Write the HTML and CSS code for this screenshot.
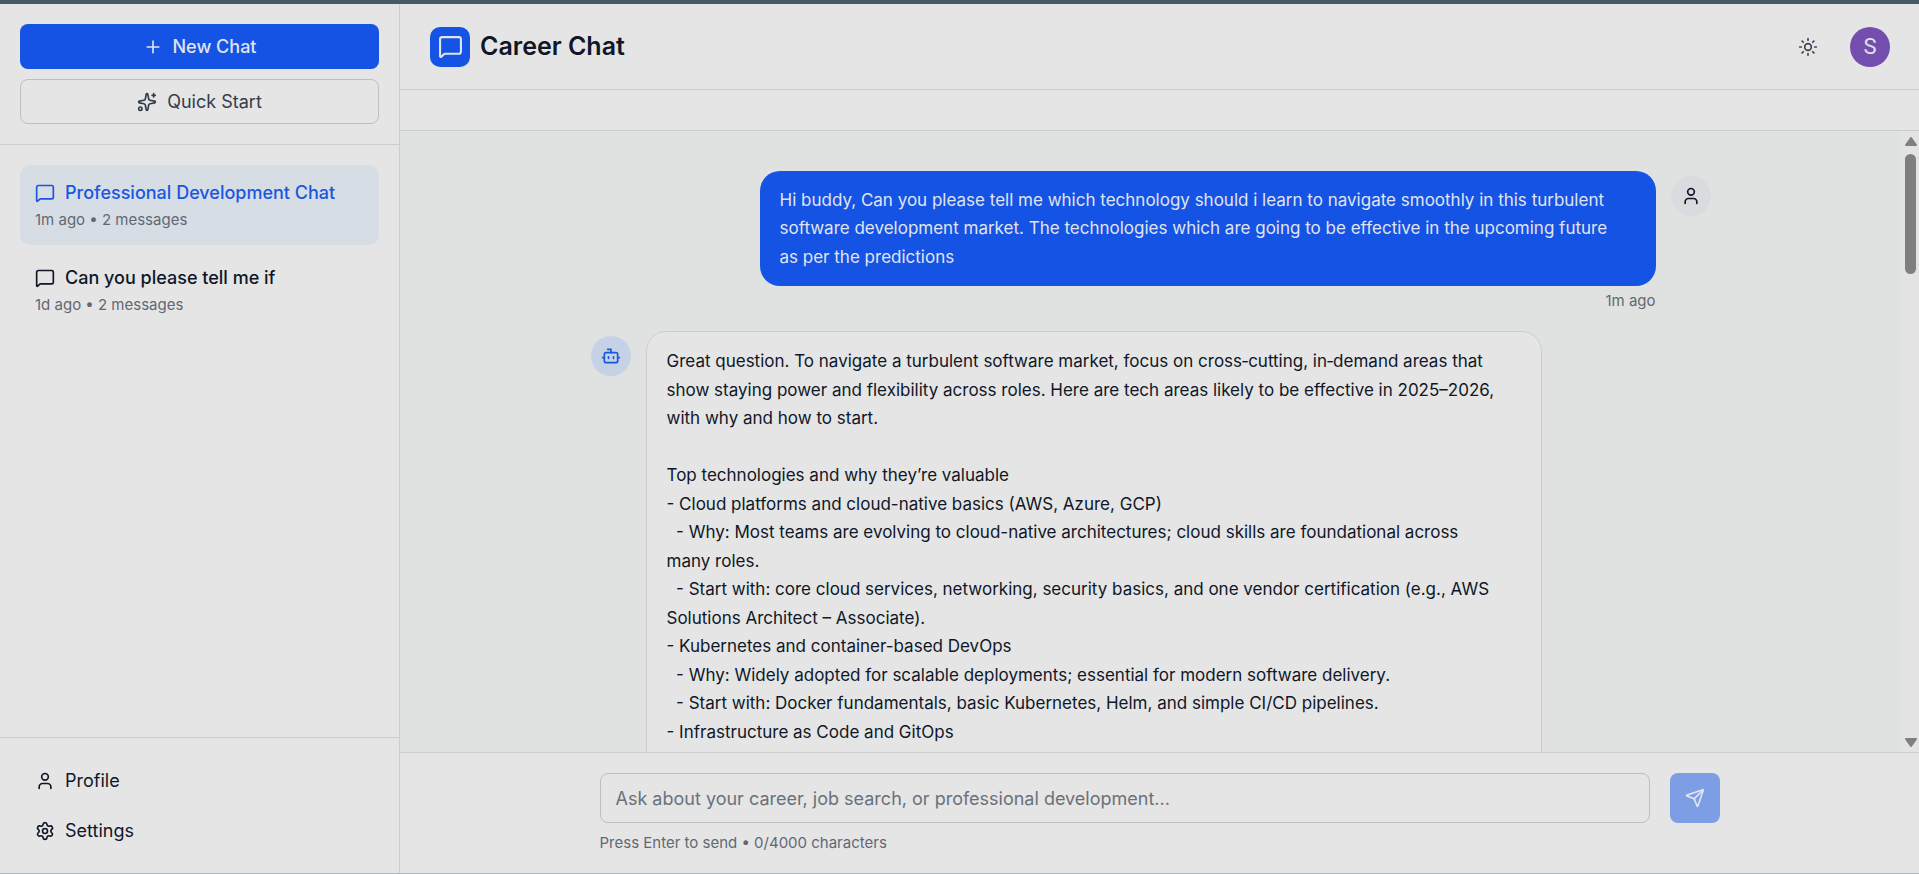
FILE: index.html
```html
<!DOCTYPE html>
<html lang="en">
<head>
<meta charset="utf-8">
<meta name="viewport" content="width=device-width, initial-scale=1">
<title>Career Chat</title>
<link rel="stylesheet" href="styles.css">
</head>
<body>
<svg class="sprite" aria-hidden="true">
  <symbol id="i-chat" viewBox="0 0 24 24"><path d="M22 17a2 2 0 0 1-2 2H6.828a2 2 0 0 0-1.414.586l-2.202 2.202A.71.71 0 0 1 2 21.286V5a2 2 0 0 1 2-2h16a2 2 0 0 1 2 2z"/></symbol>
  <symbol id="i-user" viewBox="0 0 24 24"><path d="M19 21v-2a4 4 0 0 0-4-4H9a4 4 0 0 0-4 4v2"/><circle cx="12" cy="7" r="4"/></symbol>
</svg>
<div class="app">
  <aside class="sidebar">
    <div class="actions">
      <button class="btn btn-primary" type="button">
        <svg class="icon" viewBox="0 0 24 24"><path d="M5 12h14M12 5v14"/></svg>New Chat
      </button>
      <button class="btn btn-outline" type="button">
        <svg class="icon" viewBox="0 0 24 24"><path d="M11.017 2.814a1 1 0 0 1 1.966 0l1.051 5.558a2 2 0 0 0 1.594 1.594l5.558 1.051a1 1 0 0 1 0 1.966l-5.558 1.051a2 2 0 0 0-1.594 1.594l-1.051 5.558a1 1 0 0 1-1.966 0l-1.051-5.558a2 2 0 0 0-1.594-1.594l-5.558-1.051a1 1 0 0 1 0-1.966l5.558-1.051a2 2 0 0 0 1.594-1.594z"/><path d="M20 2v4M22 4h-4"/><circle cx="4" cy="20" r="2"/></svg>Quick Start
      </button>
    </div>
    <nav class="history" aria-label="Conversations">
      <a class="thread thread-active" href="#">
        <span class="thread-title"><svg class="icon"><use href="#i-chat"/></svg>Professional Development Chat</span>
        <span class="thread-meta">1m ago • 2 messages</span>
      </a>
      <a class="thread" href="#">
        <span class="thread-title"><svg class="icon"><use href="#i-chat"/></svg>Can you please tell me if</span>
        <span class="thread-meta">1d ago • 2 messages</span>
      </a>
    </nav>
    <nav class="account" aria-label="Account">
      <a class="account-link" href="#"><svg class="icon"><use href="#i-user"/></svg>Profile</a>
      <a class="account-link" href="#"><svg class="icon" viewBox="0 0 24 24"><path d="M9.671 4.136a2.340 2.340 0 0 1 4.659 0 2.340 2.340 0 0 0 3.319 1.915 2.340 2.340 0 0 1 2.330 4.033 2.340 2.340 0 0 0 0 3.831 2.340 2.340 0 0 1-2.330 4.033 2.340 2.340 0 0 0-3.319 1.915 2.340 2.340 0 0 1-4.659 0 2.340 2.340 0 0 0-3.320-1.915 2.340 2.340 0 0 1-2.330-4.033 2.340 2.340 0 0 0 0-3.831A2.340 2.340 0 0 1 6.350 6.051a2.340 2.340 0 0 0 3.319-1.915"/><circle cx="12" cy="12" r="3"/></svg>Settings</a>
    </nav>
  </aside>
  <main class="main">
    <header class="topbar">
      <span class="logo"><svg class="icon icon-large"><use href="#i-chat"/></svg></span>
      <h1 class="title">Career Chat</h1>
      <button class="theme" type="button" aria-label="Toggle theme">
        <svg class="icon" viewBox="0 0 24 24"><circle cx="12" cy="12" r="4"/><path d="M12 2v2M12 20v2M4.930 4.930l1.410 1.410M17.660 17.660l1.410 1.410M2 12h2M20 12h2M6.340 17.660l-1.410 1.410M19.070 4.930l-1.410 1.410"/></svg>
      </button>
      <button class="profile" type="button" aria-label="Account menu">S</button>
    </header>
    <div class="subbar"></div>
    <div class="viewport">
      <div class="messages">
        <div class="column">
          <article class="message message-user">
            <div class="body">
              <div class="bubble bubble-user">Hi buddy, Can you please tell me which technology should i learn to navigate smoothly in this turbulent software development market. The technologies which are going to be effective in the upcoming future as per the predictions</div>
              <time class="time">1m ago</time>
            </div>
            <span class="avatar avatar-user"><svg class="icon"><use href="#i-user"/></svg></span>
          </article>
          <article class="message">
            <span class="avatar avatar-bot"><svg class="icon" viewBox="0 0 24 24"><path d="M12 8V4H8"/><rect width="16" height="12" x="4" y="8" rx="2"/><path d="M2 14h2M20 14h2M15 13v2M9 13v2"/></svg></span>
            <div class="body">
              <div class="bubble bubble-bot">Great question. To navigate a turbulent software market, focus on cross‑cutting, in‑demand areas that show staying power and flexibility across roles. Here are tech areas likely to be effective in 2025–2026, with why and how to start.

Top technologies and why they’re valuable
- Cloud platforms and cloud-native basics (AWS, Azure, GCP)
  - Why: Most teams are evolving to cloud-native architectures; cloud skills are foundational across many roles.
  - Start with: core cloud services, networking, security basics, and one vendor certification (e.g., AWS Solutions Architect – Associate).
- Kubernetes and container-based DevOps
  - Why: Widely adopted for scalable deployments; essential for modern software delivery.
  - Start with: Docker fundamentals, basic Kubernetes, Helm, and simple CI/CD pipelines.
- Infrastructure as Code and GitOps</div>
            </div>
          </article>
        </div>
      </div>
      <div class="scrollbar" aria-hidden="true">
        <svg class="arrow" viewBox="0 0 12 9"><path d="M6 1l5 7H1z"/></svg>
        <span class="thumb"></span>
        <svg class="arrow arrow-down" viewBox="0 0 12 9"><path d="M1 1h10L6 8z"/></svg>
      </div>
    </div>
    <form class="composer">
      <div class="composer-inner">
        <div class="entry">
          <input class="prompt" type="text" aria-label="Message" placeholder="Ask about your career, job search, or professional development...">
          <button class="send" type="button" aria-label="Send" disabled><svg class="icon" viewBox="0 0 24 24"><path d="M14.536 21.686a.5.5 0 0 0 .937-.024l6.500-19a.496.496 0 0 0-.635-.635l-19 6.500a.5.5 0 0 0-.024.937l7.930 3.180a2 2 0 0 1 1.112 1.110z"/><path d="m21.854 2.147-10.940 10.939"/></svg></button>
        </div>
        <p class="hint">Press Enter to send • 0/4000 characters</p>
      </div>
    </form>
  </main>
</div>
</body>
</html>
```
FILE: styles.css
```css
:root {
  --surface: #e5e5e5;
  --canvas: #e0e2e1;
  --line: #cbcdd0;
  --line-strong: #bbbec5;
  --ink: #0f1728;
  --muted: #626873;
  --blue: #1453e3;
}

* { box-sizing: border-box; }

body {
  margin: 0;
  font-family: Inter, "Liberation Sans", sans-serif;
  font-size: 18px;
  line-height: 25px;
  color: var(--ink);
  background: var(--surface);
}

button, input { font: inherit; }
a { color: inherit; text-decoration: none; }
.sprite { position: absolute; width: 0; height: 0; }

.icon {
  width: 20px;
  height: 20px;
  flex: none;
  fill: none;
  stroke: currentColor;
  stroke-width: 2;
  stroke-linecap: round;
  stroke-linejoin: round;
}
.icon-large { width: 25px; height: 25px; }

.app {
  display: flex;
  height: 100vh;
  border-top: 4px solid #455b68;
  border-bottom: 1px solid #aeb5bd;
}

.sidebar {
  display: flex;
  flex-direction: column;
  flex: none;
  width: 400px;
  border-right: 1px solid var(--line);
}
.actions {
  display: grid;
  gap: 10px;
  padding: 20px;
  border-bottom: 1px solid var(--line);
}
.btn {
  display: flex;
  align-items: center;
  justify-content: center;
  gap: 10px;
  height: 45px;
  border: 1px solid transparent;
  border-radius: 8px;
  font-weight: 500;
}
.btn-primary { background: var(--blue); color: #e0e4ee; }
.btn-outline { background: transparent; border-color: var(--line-strong); color: #323c4b; font-weight: 400; }

.history { flex: 1; padding: 20px; }
.thread { display: block; height: 80px; margin-bottom: 5px; padding: 15px; border-radius: 10px; }
.thread-active { background: #d7dde5; }
.thread-title { display: flex; align-items: center; gap: 10px; font-weight: 500; }
.thread-active .thread-title { color: #1a56e0; }
.thread-meta { display: block; margin-top: 5px; font-size: 15px; line-height: 20px; color: var(--muted); }

.account { display: grid; gap: 5px; padding: 20px; border-top: 1px solid var(--line); }
.account-link { display: flex; align-items: center; gap: 10px; height: 45px; padding: 0 15px; }

.main { display: flex; flex-direction: column; flex: 1; min-width: 0; }
.topbar {
  display: flex;
  align-items: center;
  height: 86px;
  flex: none;
  padding: 0 29px 0 30px;
  border-bottom: 1px solid var(--line);
}
.logo {
  display: grid;
  place-items: center;
  width: 40px;
  height: 40px;
  border-radius: 10px;
  background: var(--blue);
  color: #e0e4ee;
}
.title { margin: 0 auto 0 10px; font-size: 25px; line-height: 35px; font-weight: 600; }
.theme {
  display: grid;
  place-items: center;
  width: 45px;
  height: 45px;
  margin-right: 20px;
  padding: 0;
  border: 0;
  background: none;
  color: #3a4454;
}
.profile {
  width: 40px;
  height: 40px;
  padding: 0;
  border: 0;
  border-radius: 50%;
  background: #744eae;
  color: #e3e0ea;
  font-family: Roboto, sans-serif;
  font-size: 22px;
}
.subbar { height: 41px; flex: none; border-bottom: 1px solid var(--line); }

.viewport { display: flex; flex: 1; min-height: 0; background: var(--canvas); }
.messages { flex: 1; min-width: 0; overflow: hidden; padding: 40px 30px 0; }
.column { display: grid; gap: 20px; max-width: 1120px; margin: 0 auto; }
.message { display: flex; align-items: flex-start; gap: 15px; }
.message-user { justify-content: flex-end; }
.body { width: 80%; }
.avatar {
  display: grid;
  place-items: center;
  flex: none;
  width: 40px;
  height: 40px;
  margin-top: 5px;
  border-radius: 50%;
}
.avatar-user { background: #dadbde; }
.avatar-bot { background: #c5d2e6; color: #1a56e0; }
.bubble {
  padding: 15px 40px 15px 20px;
  border-radius: 20px;
  font-size: 17px;
  line-height: 1.675;
  white-space: pre-wrap;
}
.bubble-user { background: var(--blue); color: #e0e4ee; }
.bubble-bot { padding-bottom: 40px; background: var(--surface); border: 1px solid var(--line); }
.time { display: block; margin-top: 5px; font-size: 15px; line-height: 20px; text-align: right; color: var(--muted); }

.scrollbar {
  display: flex;
  flex-direction: column;
  align-items: center;
  gap: 8px;
  width: 18px;
  flex: none;
  padding: 6px 0 5px 1px;
  background: #e3e3e3;
}
.arrow { width: 12px; height: 9px; fill: #7f7f7f; stroke: #7f7f7f; stroke-width: 2; stroke-linejoin: round; }
.arrow-down { margin-top: auto; }
.thumb { width: 11px; height: 120px; border-radius: 6px; background: #7f7f7f; }

.composer { flex: none; padding: 20px 30px; border-top: 1px solid var(--line); }
.composer-inner { max-width: 1120px; margin: 0 auto; }
.entry { display: flex; gap: 20px; }
.prompt {
  flex: 1;
  min-width: 0;
  height: 50px;
  padding: 0 15px;
  border: 1px solid var(--line-strong);
  border-radius: 8px;
  background: transparent;
  color: var(--ink);
}
.prompt::placeholder { color: #6a717c; opacity: 1; }
.send {
  display: grid;
  place-items: center;
  width: 50px;
  height: 50px;
  padding: 0;
  border: 0;
  border-radius: 8px;
  background: #7d9de4;
  color: #dfe4ee;
}
.hint { margin: 10px 0 0; font-size: 15px; line-height: 20px; color: var(--muted); }
```
